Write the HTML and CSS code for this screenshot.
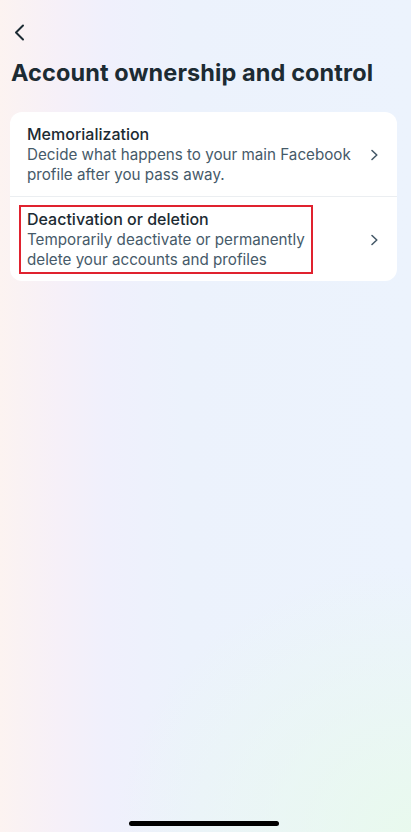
FILE: index.html
```html
<!DOCTYPE html>
<html lang="en">
<head>
  <meta charset="UTF-8" />
  <meta name="viewport" content="width=device-width, initial-scale=1.0"/>
  <title>Account ownership and control</title>
  <link rel="stylesheet" href="styles.css">
</head>
<body>
  <div class="screen">
    <header class="top-bar">
      <button class="back-btn" aria-label="Back">
        <svg width="12" height="17" viewBox="0 0 12 17" fill="none">
          <path d="M10 1.5 L3 8.5 L10 15.5" stroke="#1c2b33" stroke-width="2" stroke-linecap="round" stroke-linejoin="round"/>
        </svg>
      </button>
    </header>

    <h1 class="page-title">Account ownership and control</h1>

    <div class="card">
      <a class="row" href="#">
        <div class="row-text">
          <div class="row-title">Memorialization</div>
          <div class="row-desc">Decide what happens to your main Facebook profile after you pass away.</div>
        </div>
        <svg class="chevron" width="9" height="12" viewBox="0 0 9 12" fill="none">
          <path d="M2 1.5 L6.8 6 L2 10.5" stroke="#465a69" stroke-width="1.6" stroke-linecap="round" stroke-linejoin="round"/>
        </svg>
      </a>
      <a class="row" href="#">
        <div class="row-text">
          <div class="row-title">Deactivation or deletion</div>
          <div class="row-desc narrow">Temporarily deactivate or permanently delete your accounts and profiles</div>
        </div>
        <svg class="chevron" width="9" height="12" viewBox="0 0 9 12" fill="none">
          <path d="M2 1.5 L6.8 6 L2 10.5" stroke="#465a69" stroke-width="1.6" stroke-linecap="round" stroke-linejoin="round"/>
        </svg>
        <span class="highlight"></span>
      </a>
    </div>

    <div class="home-indicator"></div>
  </div>
</body>
</html>
```

FILE: styles.css
```css
* {
    margin: 0;
    padding: 0;
    box-sizing: border-box;
}
body {
    font-family: Inter, 'Noto Sans', sans-serif;
    color: #1c2b33;
    background: #ecf2fc;
}
.screen {
    position: relative;
    width: 411px;
    height: 832px;
    overflow: hidden;
    display: flex;
    flex-direction: column;
    background:
        radial-gradient(ellipse 420px 380px at 100% 100%, rgba(232, 250, 236, 0.9), rgba(232, 250, 236, 0) 70%),
        linear-gradient(90deg, #fcf3f1 0%, #f6f0f8 14%, #f0f0fc 26%, #ecf2fc 45%, #ecf3fd 100%);
}
.top-bar {
    height: 59px;
    padding: 24px 0 0 13px;
}
.back-btn {
    border: none;
    background: none;
    width: 16px;
    height: 17px;
    display: flex;
    cursor: pointer;
}
.page-title {
    font-size: 23.5px;
    font-weight: 700;
    line-height: 28px;
    letter-spacing: 0.1px;
    padding-left: 11px;
    margin-bottom: 25px;
}
.card {
    margin: 0 14px 0 10px;
    background: #fff;
    border-radius: 12px;
    overflow: hidden;
}
.row {
    position: relative;
    display: flex;
    align-items: center;
    padding: 12px 18px 11px 17px;
    text-decoration: none;
    color: inherit;
}
.row + .row {
    border-top: 1px solid #ebeef1;
}
.row-text {
    flex: 1;
    padding-right: 10px;
}
.row-title {
    font-size: 16px;
    font-weight: 500;
    line-height: 21px;
    color: #1c2b33;
}
.row-desc {
    font-size: 15.2px;
    line-height: 20px;
    color: #465a69;
}
.row-desc.narrow {
    max-width: 290px;
}
.chevron {
    flex-shrink: 0;
}
.highlight {
    position: absolute;
    left: 9px;
    top: 8px;
    width: 294px;
    height: 69px;
    border: 2px solid #e0222f;
    pointer-events: none;
}
.home-indicator {
    position: absolute;
    left: 129px;
    bottom: 6px;
    width: 150px;
    height: 5px;
    border-radius: 3px;
    background: #000;
}
```
